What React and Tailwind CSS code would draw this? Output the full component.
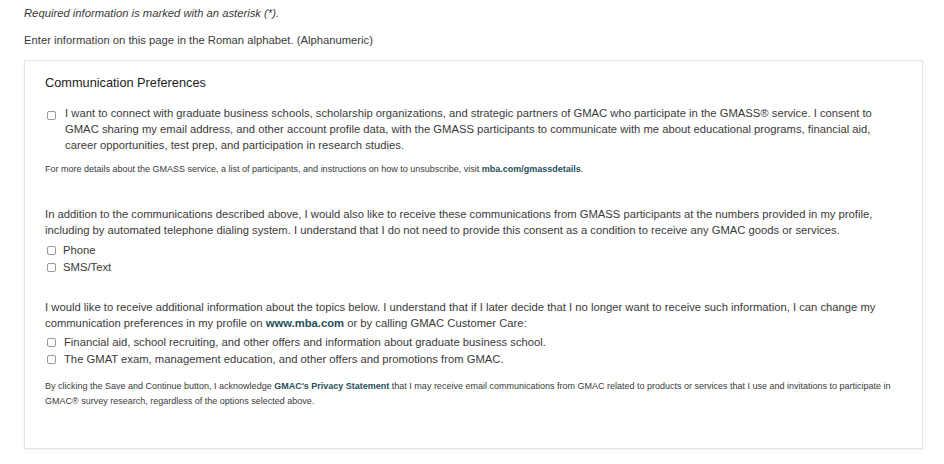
import React from "react";

const Box = () => (
    <span className="inline-block w-[9px] h-[9px] border border-[#9a9a9a] rounded-[2px] bg-white shrink-0" />
);

const CheckRow = ({ children, className = "" }) => (
    <label className={"flex items-center pl-[2px] " + className}>
        <Box />
        <span>{children}</span>
    </label>
);

export default function App() {
    return (
        <div
            style={{ fontFamily: "'Liberation Sans', Arial, sans-serif" }}
            className="w-[944px] h-[464px] bg-white text-[#3a3a3a] pl-6 pt-[5px] overflow-hidden"
        >
            <p className="text-[11.25px] leading-4 italic">Required information is marked with an asterisk (*).</p>
            <p className="text-[11.25px] leading-4 mt-[11px]">Enter information on this page in the Roman alphabet. (Alphanumeric)</p>

            <div className="mt-3 w-[899px] border border-[#e4e4e4] shadow-[0_1px_2px_rgba(0,0,0,0.06)] px-5 pt-[13px] pb-[39px]">
                <h2 className="text-[12.75px] leading-[18px] text-[#222]">Communication Preferences</h2>

                <div className="mt-[13px] flex gap-[9px] text-[11.25px] leading-4">
                    <span className="mt-[3px] pl-[2px]">
                        <Box />
                    </span>
                    <p>
                        I want to connect with graduate business schools, scholarship organizations, and strategic partners of GMAC who participate in the GMASS® service. I consent to GMAC sharing my email address, and other account profile data, with the GMASS participants to communicate with me about educational programs, financial aid, career opportunities, test prep, and participation in research studies.
                    </p>
                </div>

                <p className="mt-[10px] text-[9px] leading-3">
                    For more details about the GMASS service, a list of participants, and instructions on how to unsubscribe, visit{" "}
                    <a className="font-bold text-[#1f4f5a]">mba.com/gmassdetails</a>.
                </p>

                <p className="mt-[31px] text-[11.25px] leading-4">
                    In addition to the communications described above, I would also like to receive these communications from GMASS participants at the numbers provided in my profile, including by automated telephone dialing system. I understand that I do not need to provide this consent as a condition to receive any GMAC goods or services.
                </p>
                <div className="mt-1 text-[11.25px] leading-[17px]">
                    <CheckRow className="gap-[7px]">Phone</CheckRow>
                    <CheckRow className="gap-[7px]">SMS/Text</CheckRow>
                </div>

                <p className="mt-[23px] text-[11.25px] leading-4">
                    I would like to receive additional information about the topics below. I understand that if I later decide that I no longer want to receive such information, I can change my communication preferences in my profile on{" "}
                    <a className="font-bold text-[#1f4f5a]">www.mba.com</a> or by calling GMAC Customer Care:
                </p>
                <div className="mt-[3px] text-[11.25px] leading-[17px]">
                    <CheckRow className="gap-[8px]">Financial aid, school recruiting, and other offers and information about graduate business school.</CheckRow>
                    <CheckRow className="gap-[8px]">The GMAT exam, management education, and other offers and promotions from GMAC.</CheckRow>
                </div>

                <p className="mt-[11px] text-[9px] leading-[15px]">
                    By clicking the Save and Continue button, I acknowledge{" "}
                    <a className="font-bold text-[#1f4f5a]">GMAC's Privacy Statement</a> that I may receive email communications from GMAC related to products or services that I use and invitations to participate in GMAC® survey research, regardless of the options selected above.
                </p>
            </div>
        </div>
    );
}
